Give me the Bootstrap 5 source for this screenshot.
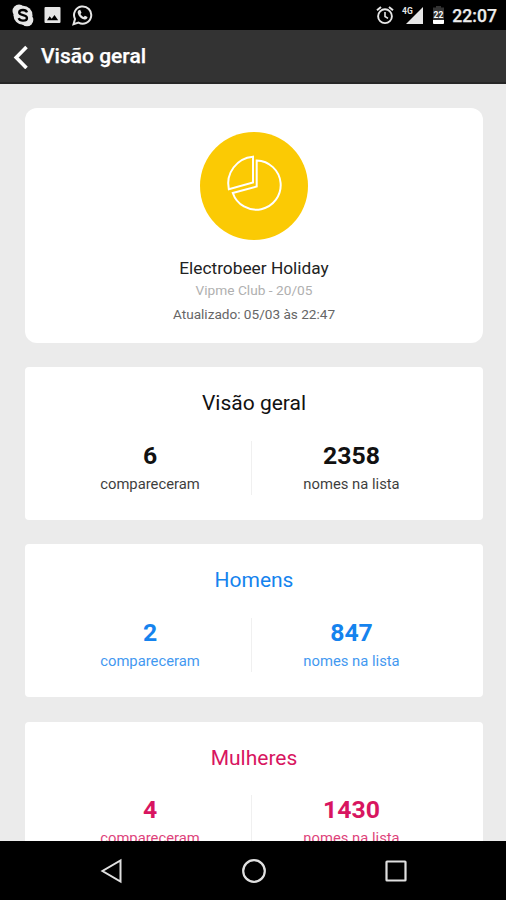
<!DOCTYPE html>
<html lang="pt-BR">
<head>
<meta charset="utf-8">
<meta name="viewport" content="width=device-width, initial-scale=1">
<title>Visão geral</title>
<link rel="stylesheet" href="https://cdn.jsdelivr.net/npm/bootstrap@5.3.0/dist/css/bootstrap.min.css">
<style>
  body { font-family: Roboto, "Liberation Sans", sans-serif; background: #ebebeb; color: #111; }
  svg { display: block; flex: none; }
  .status { height: 30px; background: #000; color: #ececec; padding: 0 9px 0 12px; }
  .status-left { gap: 9px; }
  .status-right { gap: 7px; }
  .status-time { font-size: 17.6px; font-weight: 500; line-height: 30px; padding-top: 2px; -webkit-text-stroke: .25px; }
  .appbar { height: 54px; background: #333; border-bottom: 2px solid #262626; padding: 0 13px; gap: 12px; }
  .appbar h1 { font-size: 21px; font-weight: 500; line-height: 24px; -webkit-text-stroke: .25px; }
  .feed { padding: 24px 23px 0 25px; gap: 24.5px; min-height: 0; }
  .panel { border: 0; border-radius: 4px; height: 152.8px; flex: none; padding-top: 21px; }
  .event { height: 234.5px; border-radius: 12px; padding-top: 24px; }
  .event-icon { width: 108px; height: 108px; background: #fbca04; }
  .event-name { font-size: 17.3px; line-height: 24px; margin-top: 16px; color: #222; }
  .event-place { font-size: 13.7px; line-height: 20px; color: #b0b0b0; }
  .event-time { font-size: 13.6px; line-height: 20px; color: #666; margin-top: 4px; }
  .panel h2 { font-size: 21px; font-weight: 400; line-height: 30px; }
  .stats { width: 402px; margin: 23px 7px 0 0; }
  .stats > div { height: 54px; }
  .stats > div + div { border-left: 1px solid #f0f0f0; }
  .stat-value { font-size: 24.8px; font-weight: 700; line-height: 30px; }
  .stat-label { font-size: 14.8px; line-height: 20px; margin-top: 3px; opacity: .82; }
  .men { color: #1583ee; }
  .women { color: #d81560; }
  .women .stats { margin-top: 22px; }
  .keys { height: 59px; background: #000; padding: 0 98px 0 99px; }
</style>
<script src="https://cdn.jsdelivr.net/npm/bootstrap@5.3.0/dist/js/bootstrap.bundle.min.js"></script>
</head>
<body class="vh-100 d-flex flex-column overflow-hidden">
  <div class="status d-flex align-items-center justify-content-between flex-shrink-0">
    <div class="status-left d-flex align-items-center">
      <svg width="22" height="24" viewBox="0 0 22 24">
        <circle cx="7" cy="8" r="6.5" fill="#e6e6e6"/><circle cx="15" cy="17" r="6.3" fill="#e6e6e6"/><circle cx="11" cy="12.300" r="9.500" fill="#e6e6e6"/>
        <path d="M15 9.300C14.400 7.500 12.800 7 11 7C8.700 7 7.200 8 7.200 9.600C7.200 13 15 11.400 15 15C15 16.700 13.300 17.700 11 17.700C8.800 17.700 7.300 16.900 6.700 15.200" fill="none" stroke="#000" stroke-width="2.300"/>
      </svg>
      <svg width="20" height="20" viewBox="0 0 20 20">
        <path fill="#e6e6e6" fill-rule="evenodd" d="M2.500 2H16.500Q17.500 2 17.500 3V17Q17.500 18 16.500 18H2.500Q1.500 18 1.500 17V3Q1.500 2 2.500 2ZM4 15.300H15.200L11.500 10L8.700 13.700L6.700 11.300Z"/>
      </svg>
      <svg width="22" height="22" viewBox="0 0 22 22">
        <path d="M1.500 20.300L3 15A8.600 8.600 0 1 1 6.500 18.600Z" fill="none" stroke="#e6e6e6" stroke-width="2"/>
        <path d="M6.700 6.200L8.200 5.800L9.500 8.700L8.500 10C9.200 11.500 10.200 12.400 11.700 13L12.900 11.800L15.500 13.100C15.500 15 14 15.800 12.500 15.500C9 14.800 6.400 12.200 5.700 9C5.500 7.800 5.900 6.800 6.700 6.200Z" fill="#e6e6e6"/>
      </svg>
    </div>
    <div class="status-right d-flex align-items-center">
      <svg width="18" height="20" viewBox="0 0 18 20" fill="none" stroke="#e6e6e6">
        <circle cx="9" cy="11.200" r="6.900" stroke-width="1.900"/>
        <path d="M9 7V11.500L12 13.400" stroke-width="1.600"/>
        <path d="M1 5.300L5 2M17 5.300L13 2" stroke-width="2"/>
      </svg>
      <svg width="24" height="20" viewBox="0 0 24 20" fill="#e6e6e6">
        <path d="M5 19L22 2V19Z"/>
        <text x="1" y="8.500" font-size="8.500" font-weight="700">4G</text>
      </svg>
      <svg width="13" height="20" viewBox="0 0 13 20">
        <path d="M4 1H9V2.500H12V19H1V2.500H4Z" fill="#333"/>
        <path d="M1 15H12V18Q12 19 11 19H2Q1 19 1 18Z" fill="#fff"/>
        <text x="6.500" y="12.800" text-anchor="middle" font-size="8.500" font-weight="700" fill="#fff">22</text>
      </svg>
      <div class="status-time">22:07</div>
    </div>
  </div>

  <header class="appbar d-flex align-items-center flex-shrink-0">
    <svg width="16" height="26" viewBox="0 0 16 26"><path d="M13.500 4L3.200 14.500L13.500 25" fill="none" stroke="#fff" stroke-width="3.600"/></svg>
    <h1 class="text-white mb-0">Visão geral</h1>
  </header>

  <main class="feed d-flex flex-column flex-grow-1 overflow-hidden text-center">
    <section class="card panel event align-items-center">
      <div class="event-icon rounded-circle">
        <svg width="108" height="108" viewBox="0 0 108 108" fill="none" stroke="#fff" stroke-width="2">
          <path d="M53 24.700V50.500L28.800 57.200A27 27 0 0 1 53 24.700Z"/>
          <path d="M56.700 28.500A24.600 24.600 0 1 1 32.800 61L56.700 54.500Z"/>
        </svg>
      </div>
      <div class="event-name">Electrobeer Holiday</div>
      <div class="event-place">Vipme Club - 20/05</div>
      <div class="event-time">Atualizado: 05/03 às 22:47</div>
    </section>

    <section class="card panel align-items-center">
      <h2 class="mb-0">Visão geral</h2>
      <div class="stats row g-0">
        <div class="col-6"><div class="stat-value">6</div><div class="stat-label">compareceram</div></div>
        <div class="col-6"><div class="stat-value">2358</div><div class="stat-label">nomes na lista</div></div>
      </div>
    </section>

    <section class="card panel men align-items-center">
      <h2 class="mb-0">Homens</h2>
      <div class="stats row g-0">
        <div class="col-6"><div class="stat-value">2</div><div class="stat-label">compareceram</div></div>
        <div class="col-6"><div class="stat-value">847</div><div class="stat-label">nomes na lista</div></div>
      </div>
    </section>

    <section class="card panel women align-items-center">
      <h2 class="mb-0">Mulheres</h2>
      <div class="stats row g-0">
        <div class="col-6"><div class="stat-value">4</div><div class="stat-label">compareceram</div></div>
        <div class="col-6"><div class="stat-value">1430</div><div class="stat-label">nomes na lista</div></div>
      </div>
    </section>
  </main>

  <nav class="keys d-flex align-items-center justify-content-between flex-shrink-0" aria-label="Sistema">
    <svg width="24" height="26" viewBox="0 0 24 26"><path d="M21.500 2.500V23.500L3.500 13Z" fill="none" stroke="#e0e0e0" stroke-width="2"/></svg>
    <svg width="26" height="26" viewBox="0 0 26 26"><circle cx="13" cy="13" r="10.800" fill="none" stroke="#e0e0e0" stroke-width="2.200"/></svg>
    <svg width="24" height="24" viewBox="0 0 24 24"><rect x="2.500" y="2.500" width="19" height="19" rx=".5" fill="none" stroke="#e0e0e0" stroke-width="2.200"/></svg>
  </nav>
</body>
</html>
